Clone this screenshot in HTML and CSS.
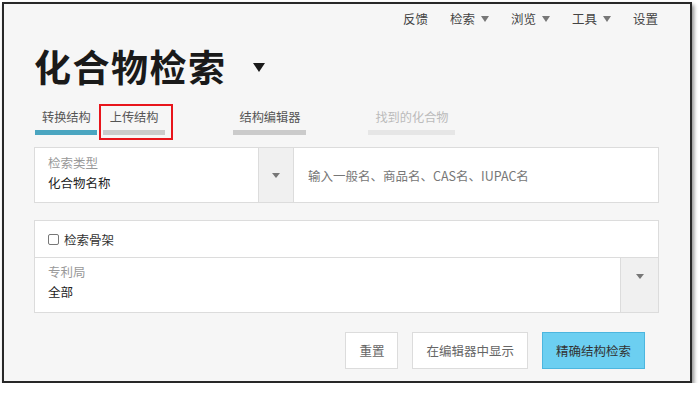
FILE: index.html
```html
<!DOCTYPE html>
<html lang="zh-CN">

<head>
    <meta charset="UTF-8">
    <meta name="viewport" content="width=device-width, initial-scale=1.0">
    <title>化合物检索</title>
    <link rel="stylesheet" href="styles.css">
</head>

<body>
    <div class="frame">
        <nav class="top-nav">
            <a class="nav-item">反馈</a>
            <a class="nav-item">检索<span class="caret"></span></a>
            <a class="nav-item">浏览<span class="caret"></span></a>
            <a class="nav-item">工具<span class="caret"></span></a>
            <a class="nav-item">设置</a>
        </nav>

        <header class="page-title">
            <h1>化合物检索</h1>
            <span class="title-caret"></span>
        </header>

        <div class="tabs">
            <div class="tab tab-active">转换结构</div>
            <div class="tab tab-marked">上传结构</div>
            <div class="tab tab-editor">结构编辑器</div>
            <div class="tab tab-disabled">找到的化合物</div>
        </div>

        <div class="search-row">
            <div class="select-field">
                <div class="field-label">检索类型</div>
                <div class="field-value">化合物名称</div>
            </div>
            <div class="select-toggle"><span class="small-caret"></span></div>
            <input class="search-input" type="text" placeholder="输入一般名、商品名、CAS名、IUPAC名">
        </div>

        <div class="options-box">
            <label class="check-row">
                <span class="checkbox"></span>
                检索骨架
            </label>
            <div class="office-row">
                <div class="office-field">
                    <div class="field-label">专利局</div>
                    <div class="field-value">全部</div>
                </div>
                <div class="office-toggle"><span class="small-caret"></span></div>
            </div>
        </div>

        <div class="actions">
            <button class="btn">重置</button>
            <button class="btn">在编辑器中显示</button>
            <button class="btn btn-primary">精确结构检索</button>
        </div>
    </div>
</body>

</html>
```

FILE: styles.css
```css
* {
    margin: 0;
    padding: 0;
    box-sizing: border-box;
    font-family: "Noto Sans CJK SC", "Noto Sans", sans-serif;
}

body {
    background-color: #fff;
}

.frame {
    margin: 2px 0 0 2px;
    width: 690px;
    height: 381px;
    border: 2px solid #282828;
    background-color: #f6f6f6;
    box-shadow: 2px 3px 4px rgba(0, 0, 0, 0.45);
    padding: 0 31px 0 30px;
    overflow: hidden;
}

/* top navigation */
.top-nav {
    display: flex;
    justify-content: flex-end;
    gap: 22px;
    margin-top: 6px;
    padding-right: 1px;
}

.nav-item {
    display: flex;
    align-items: center;
    font-size: 12.5px;
    line-height: 17px;
    color: #444;
}

.caret {
    margin-left: 6px;
    border-top: 6px solid #777;
    border-left: 4px solid transparent;
    border-right: 4px solid transparent;
}

/* title */
.page-title {
    display: flex;
    align-items: center;
    margin-top: 17px;
}

.page-title h1 {
    font-size: 37px;
    line-height: 44px;
    font-weight: 700;
    color: #1a1a1a;
    letter-spacing: 1.5px;
}

.title-caret {
    margin-left: 26px;
    margin-top: 2px;
    border-top: 9px solid #1a1a1a;
    border-left: 6px solid transparent;
    border-right: 6px solid transparent;
}

/* tabs */
.tabs {
    display: flex;
    margin-top: 21px;
    padding-left: 1px;
}

.tab {
    position: relative;
    padding: 0 6px 0 7px;
    font-size: 12.2px;
    line-height: 16px;
    color: #555;
}

.tab::after {
    content: "";
    display: block;
    height: 5px;
    margin: 5px -6px 0 -7px;
    background-color: #cbcbcb;
}

.tab-active::after {
    background-color: #4aa5c0;
}

.tab-marked {
    margin-left: 6px;
}

.tab-marked::before {
    content: "";
    position: absolute;
    left: -4px;
    right: -8px;
    top: -5px;
    bottom: -5px;
    border: 2px solid #e8151c;
}

.tab-editor {
    margin-left: 68px;
}

.tab-disabled {
    margin-left: 62px;
    color: #bbb;
}

.tab-disabled::after {
    background-color: #e6e6e6;
}

/* search row */
.search-row {
    display: flex;
    height: 56px;
    margin-top: 12px;
    border: 1px solid #dcdcdc;
    background-color: #fff;
}

.select-field {
    width: 223px;
    padding: 6px 13px 0;
}

.field-label {
    font-size: 12.5px;
    line-height: 18px;
    color: #999;
}

.field-value {
    margin-top: 2px;
    font-size: 12.5px;
    line-height: 18px;
    color: #222;
}

.select-toggle {
    width: 36px;
    display: flex;
    align-items: center;
    justify-content: center;
    background-color: #f0f0f0;
    border-left: 1px solid #dcdcdc;
    border-right: 1px solid #dcdcdc;
}

.small-caret {
    border-top: 5px solid #777;
    border-left: 4px solid transparent;
    border-right: 4px solid transparent;
}

.search-input {
    flex: 1;
    border: none;
    outline: none;
    padding-left: 14px;
    font-size: 12.5px;
    color: #333;
    background-color: #fff;
}

.search-input::placeholder {
    color: #777;
}

/* options */
.options-box {
    margin-top: 17px;
    border: 1px solid #dcdcdc;
    background-color: #fff;
}

.check-row {
    display: flex;
    align-items: center;
    gap: 5px;
    height: 37px;
    padding-left: 13px;
    font-size: 12.5px;
    color: #333;
    border-bottom: 1px solid #dcdcdc;
}

.checkbox {
    width: 11px;
    height: 11px;
    border: 1px solid #777;
    border-radius: 2px;
    background-color: #fff;
}

.office-row {
    display: flex;
    height: 54px;
}

.office-field {
    flex: 1;
    padding: 5px 13px 0;
}

.office-toggle {
    width: 38px;
    display: flex;
    justify-content: center;
    padding-top: 16px;
    background-color: #f0f0f0;
    border-left: 1px solid #dcdcdc;
}

/* actions */
.actions {
    display: flex;
    justify-content: flex-end;
    gap: 14px;
    margin-top: 19px;
    padding-right: 14px;
}

.btn {
    height: 37px;
    padding: 0 13px;
    border: 1px solid #dcdcdc;
    background-color: #fff;
    font-size: 12.5px;
    color: #666;
}

.btn-primary {
    background-color: #6ccff1;
    border-color: #4cb6df;
    color: #333;
}
```
